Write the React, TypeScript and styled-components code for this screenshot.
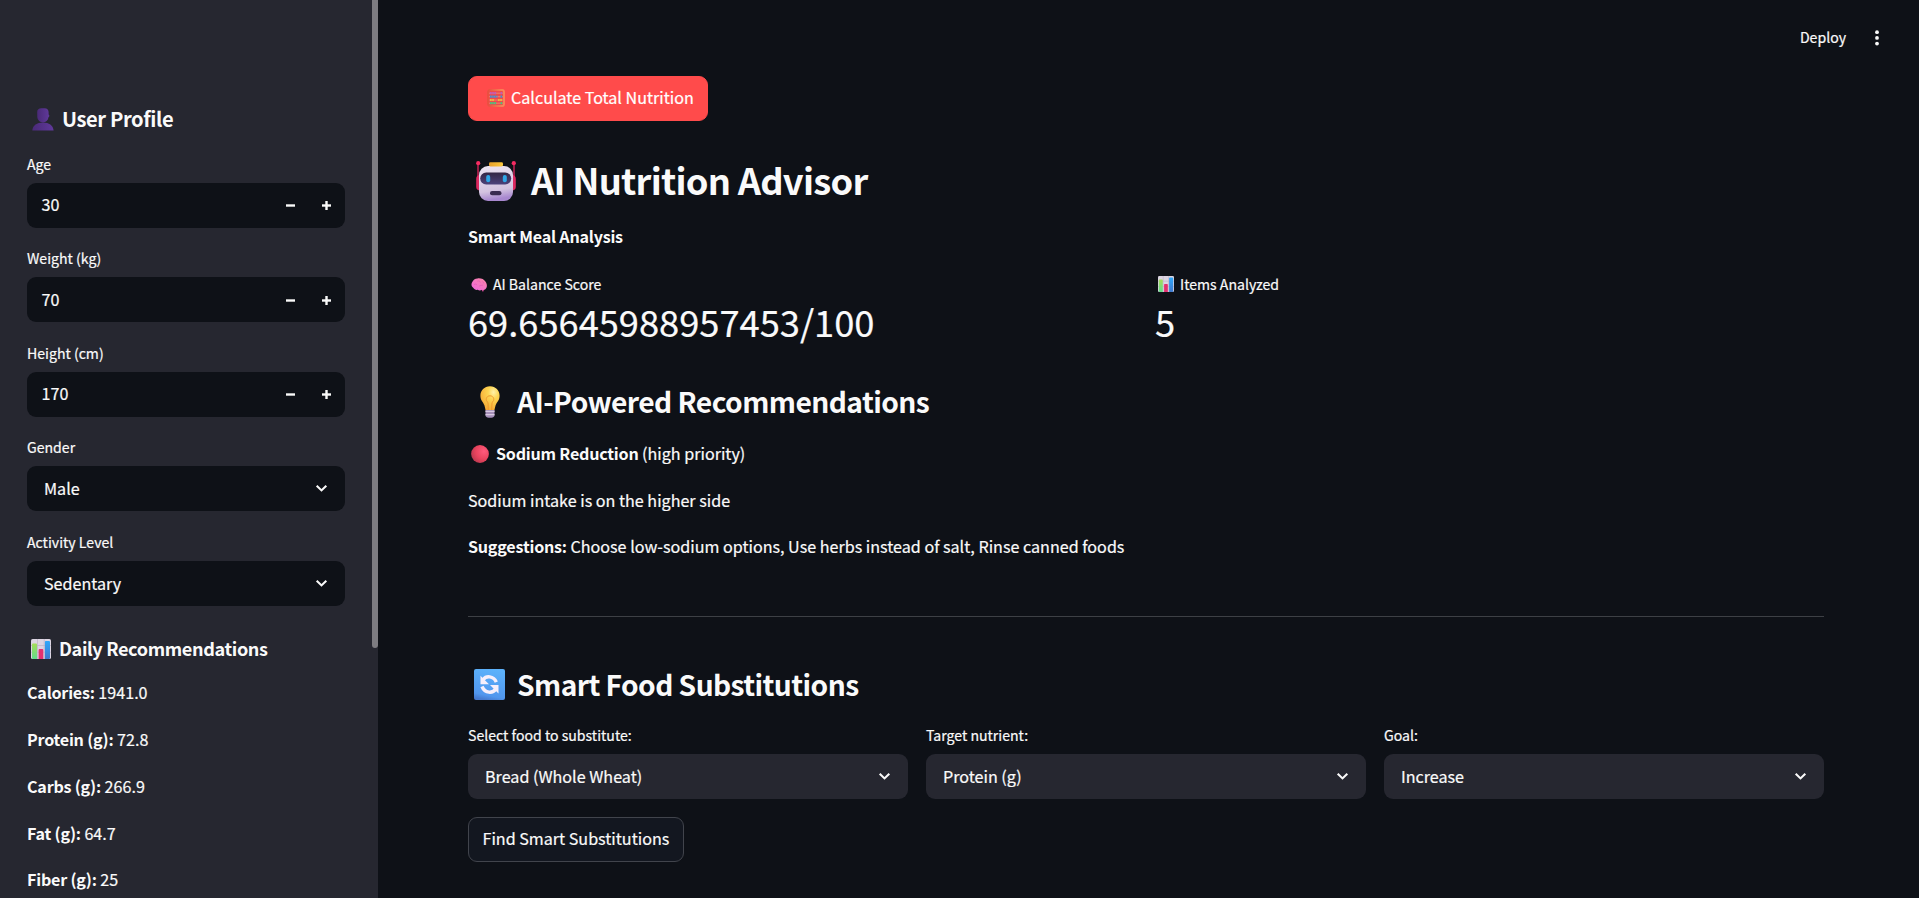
import React from "react";
import styled, { createGlobalStyle } from "styled-components";

const GlobalStyle = createGlobalStyle`
  *, *::before, *::after { box-sizing: border-box; }
  html, body { margin: 0; padding: 0; background: #0e1117; overflow: hidden; }
  body {
    font-family: "Noto Sans CJK SC", "Noto Sans", sans-serif;
    font-size: 16.11px;
    line-height: 28.8px;
    color: #fafafa;
    -webkit-text-stroke: 0.2px currentColor;
  }
  svg { display: block; flex: none; }
`;

const Shell = styled.div`
  display: flex;
  width: 100vw;
  height: 898px;
  overflow: hidden;
`;

const Sidebar = styled.aside`
  display: flex;
  flex: none;
  width: 378px;
  height: 100%;
  background: #262730;
`;

const SidebarContent = styled.div`
  flex: 1;
  height: 100%;
  overflow: hidden;
  padding: 105px 27px 0;
`;

const ScrollTrack = styled.div`
  flex: none;
  width: 6px;
`;

const ScrollThumb = styled.div`
  height: 648px;
  border-radius: 0 0 3px 3px;
  background: #7d7c81;
`;

const Main = styled.main`
  flex: 1;
  min-width: 0;
  height: 100%;
  overflow: hidden;
`;

const TopBar = styled.header`
  display: flex;
  align-items: center;
  justify-content: flex-end;
  gap: 29px;
  height: 76px;
  padding-right: 40px;
  font-size: 14.1px;
`;

const DeployLabel = styled.span`
  margin-top: -2px;
`;

const Page = styled.div`
  display: flex;
  flex-direction: column;
  align-items: stretch;
  padding: 0 95px 0 90px;
`;

const Heading = styled.h2<{ $size: number; $line: number; $top?: number; $bottom?: number; $track?: number }>`
  display: flex;
  align-items: flex-start;
  flex: none;
  height: ${(p) => p.$line}px;
  margin: ${(p) => p.$top ?? 0}px 0 ${(p) => p.$bottom ?? 0}px;
  font-size: ${(p) => p.$size}px;
  line-height: ${(p) => p.$line}px;
  font-weight: 600;
  letter-spacing: ${(p) => p.$track ?? 0}px;
  white-space: nowrap;
  -webkit-text-stroke: 0;
`;

const Glyph = styled.span<{ $left: number; $top: number; $gap: number }>`
  flex: none;
  margin: ${(p) => p.$top}px ${(p) => p.$gap}px 0 ${(p) => p.$left}px;
`;

const Line = styled.p<{ $top?: number }>`
  display: flex;
  flex: none;
  height: 28.8px;
  margin: ${(p) => p.$top ?? 18}px 0 0;
  white-space: pre;
`;

const Strong = styled.strong`
  font-weight: 600;
  letter-spacing: -0.22px;
  -webkit-text-stroke: 0;
`;

const Field = styled.div`
  display: flex;
  flex-direction: column;
  flex: 1;
  min-width: 0;
  margin-bottom: 18px;
`;

const FieldLabel = styled.label<{ $onSidebar?: boolean }>`
  height: 31.5px;
  padding-top: ${(p) => (p.$onSidebar ? 0.2 : 0)}px;
  font-size: 14.1px;
  line-height: ${(p) => (p.$onSidebar ? 25 : 26.6)}px;
`;

const Control = styled.div<{ $onSidebar?: boolean; $kind: "number" | "select" }>`
  display: flex;
  align-items: center;
  justify-content: space-between;
  height: 45px;
  padding: ${(p) => (p.$kind === "number" ? "0 14.5px 1.7px 14.5px" : "0 17px")};
  border-radius: 9px;
  background: ${(p) => (p.$onSidebar ? "#0e1117" : "#262730")};
`;

const Stepper = styled.div`
  display: flex;
  gap: 27px;
  padding-top: 2px;
`;

const Metrics = styled.div`
  display: grid;
  grid-template-columns: 1fr 1fr;
  gap: 18px;
  margin-top: 21.6px;
`;

const MetricLabel = styled.div`
  display: flex;
  height: 24px;
  font-size: 14.1px;
  line-height: 24px;
`;

const MetricValue = styled.div`
  height: 50px;
  font-size: 36.3px;
  line-height: 50px;
  letter-spacing: -0.03px;
  white-space: nowrap;
`;

const Divider = styled.hr`
  width: 100%;
  height: 1px;
  margin: 54.8px 0 0;
  border: 0;
  background: #3d4045;
`;

const FieldRow = styled.div`
  display: flex;
  gap: 18px;
`;

const Button = styled.button<{ $primary?: boolean }>`
  display: flex;
  align-items: flex-start;
  align-self: flex-start;
  flex: none;
  width: ${(p) => (p.$primary ? 240 : 216)}px;
  height: 45px;
  padding: 0 0 0 ${(p) => (p.$primary ? 18 : 13.5)}px;
  border: 1px solid ${(p) => (p.$primary ? "#ff4b4b" : "#41444c")};
  border-radius: 9px;
  background: ${(p) => (p.$primary ? "#ff4b4b" : "#131720")};
  color: ${(p) => (p.$primary ? "#fff" : "#fafafa")};
  font: inherit;
  line-height: 40px;
  white-space: nowrap;
`;

const Chevron = () => (
  <svg width="13" height="9" viewBox="0 0 13 9" fill="none" stroke="#fafafa" strokeWidth="2.1">
    <path d="M1.7 1.7 6.5 6.4 11.3 1.7" />
  </svg>
);

const Minus = () => (
  <svg width="9" height="9" viewBox="0 0 9 9">
    <rect y="3.3" width="9" height="2.4" fill="#fafafa" />
  </svg>
);

const Plus = () => (
  <svg width="9" height="9" viewBox="0 0 9 9" fill="#fafafa">
    <rect y="3.3" width="9" height="2.4" />
    <rect x="3.3" width="2.4" height="9" />
  </svg>
);

const PersonIcon = () => (
  <svg width="22" height="23" viewBox="0 0 22 23">
    <defs>
      <linearGradient id="pBody" x1="0" y1="0" x2="1" y2="0">
        <stop offset="0" stopColor="#4a2a78" />
        <stop offset="1" stopColor="#60399b" />
      </linearGradient>
    </defs>
    <path d="M0.3 22.500C0.6 17.5 5 14.600 11 14.600S21 17.5 21.600 22.500Z" fill="url(#pBody)" />
    <path d="M5.200 4C5.200 1.400 7 .3 9.200.3h3.400c2.400 0 4 1.400 4 3.700v2.600c1 .2 1 2.400-.1 2.600-.5 3.200-2.600 5.200-5.500 5.200S5.600 12.200 5.300 9z" fill="url(#pBody)" />
  </svg>
);

const ChartIcon = ({ size }: { size: number }) => (
  <svg width={size} height={size} viewBox="0 0 20 20">
    <defs>
      <linearGradient id="cGreen" x1="0" y1="0" x2="0" y2="1">
        <stop offset="0" stopColor="#a5dc58" />
        <stop offset="1" stopColor="#62dc8c" />
      </linearGradient>
      <linearGradient id="cBlue" x1="0" y1="0" x2="0" y2="1">
        <stop offset="0" stopColor="#2fa8fb" />
        <stop offset="1" stopColor="#3f78cc" />
      </linearGradient>
    </defs>
    <rect width="20" height="20" rx="1.6" fill="#dcd5e2" />
    <path d="M6.5 0v20M13.2 0v20M0 6.5h20M0 13.2h20" stroke="#bdb2c6" strokeWidth="0.7" />
    <path d="M1 5.500a1 1 0 0 1 1-1h3a1 1 0 0 1 1 1V20H2a1 1 0 0 1-1-1z" fill="url(#cGreen)" />
    <path d="M7.600 11a1 1 0 0 1 1-1h2.700a1 1 0 0 1 1 1v9H7.600z" fill="#e3306f" />
    <path d="M13.900 3a1 1 0 0 1 1-1H18a1 1 0 0 1 1 1v16a1 1 0 0 1-1 1h-4.100z" fill="url(#cBlue)" />
  </svg>
);

const AbacusIcon = () => (
  <svg width="18" height="18" viewBox="0 0 18 18">
    <defs>
      <linearGradient id="aFrame" x1="0" y1="0" x2="1" y2="0">
        <stop offset="0" stopColor="#e8503f" />
        <stop offset="1" stopColor="#fb8a58" />
      </linearGradient>
    </defs>
    <rect x="1" y="1" width="16" height="16" rx="2" fill="#ee4b4c" stroke="url(#aFrame)" strokeWidth="1.8" />
    <path d="M2 4.200h14M2 7.700h14M2 11h14M2 14.200h14" stroke="#e9a28c" strokeWidth="0.6" />
    <path d="M3 4.200h6.500M13.500 4.200h2" stroke="#c55ab4" strokeWidth="2.200" strokeDasharray="1.700 .5" />
    <path d="M3 7.700h7.500M13.500 7.700h2" stroke="#3d8fd6" strokeWidth="2.200" strokeDasharray="1.700 .5" />
    <path d="M3 11h4.500M11 11h4.500" stroke="#f6b73c" strokeWidth="2.200" strokeDasharray="1.700 .5" />
    <path d="M3 14.200h6.500M13.500 14.200h2" stroke="#4cbf7b" strokeWidth="2.200" strokeDasharray="1.700 .5" />
  </svg>
);

const RobotIcon = () => (
  <svg width="40" height="41" viewBox="0 0 40 41">
    <defs>
      <linearGradient id="rFace" x1="0" y1="0" x2="0.15" y2="1">
        <stop offset="0" stopColor="#eee6f2" />
        <stop offset="0.75" stopColor="#d3c3e0" />
        <stop offset="1" stopColor="#a888cf" />
      </linearGradient>
      <linearGradient id="rCap" x1="0" y1="0" x2="1" y2="0">
        <stop offset="0" stopColor="#e8a02b" />
        <stop offset="1" stopColor="#fbc93c" />
      </linearGradient>
      <linearGradient id="rVisor" x1="0" y1="0" x2="0" y2="1">
        <stop offset="0" stopColor="#342744" />
        <stop offset="1" stopColor="#4c427c" />
      </linearGradient>
    </defs>
    <path d="M2 2v15M38 2v15" stroke="#c52256" strokeWidth="1.500" />
    <circle cx="2.200" cy="2.200" r="2.100" fill="#f52c62" />
    <circle cx="37.800" cy="2.200" r="2.100" fill="#f52c62" />
    <path d="M4 14C1.500 14 .2 15.500.2 18v8c0 2.300 1.500 3.500 3.800 3.500zM36 14c2.500 0 3.800 1.500 3.800 4v8c0 2.300-1.500 3.500-3.800 3.500z" fill="#dc2860" />
    <rect x="3" y="5" width="34" height="35" rx="9" fill="url(#rFace)" />
    <rect x="13" y="1.200" width="14" height="4.300" rx="1.400" fill="url(#rCap)" />
    <rect x="4.200" y="11.500" width="31" height="12" rx="6" fill="url(#rVisor)" />
    <rect x="10.200" y="14" width="4" height="7.200" rx="1.900" fill="#2fa6e6" />
    <rect x="26.800" y="14" width="4" height="7.200" rx="1.900" fill="#2fa6e6" />
    <rect x="14" y="30" width="11.500" height="4.300" rx="2.100" fill="#3a2c50" />
  </svg>
);

const BrainIcon = () => (
  <svg width="16" height="15" viewBox="0 0 16 15">
    <defs>
      <linearGradient id="bPink" x1="1" y1="0" x2="0.2" y2="1">
        <stop offset="0" stopColor="#fb86a6" />
        <stop offset="1" stopColor="#f069d8" />
      </linearGradient>
    </defs>
    <path d="M9.800 10.500 12 14 13.400 10.500Z" fill="#e552a6" />
    <path d="M1 4.500C2 2 4 .4 6.500.4 10 0 13 1.200 14.400 3.600c1.500 2 2 4.500.9 6.400-.8 1.700-2.600 2.300-4.300 1.700-1.600 1-3.200.8-4.200.1-2 .4-3.800-.5-4.600-2C.3 8.500.1 6.300 1 4.500z" fill="url(#bPink)" />
    <path d="M3 6.800C4.200 5.500 5.500 6 6 7.200M6.300 3.200c1.500-.8 2.800 0 3 1.300M8 8.200c1.500-1.200 3-.4 4-1.200M11.500 3.600c.8.3 1.200 1 1.200 1.800" fill="none" stroke="#dc58b4" strokeWidth="0.600" />
  </svg>
);

const BulbIcon = () => (
  <svg width="20" height="32" viewBox="0 0 20 32">
    <defs>
      <radialGradient id="lGlass" cx="0.68" cy="0.25" r="0.8">
        <stop offset="0" stopColor="#fff2a8" />
        <stop offset="0.35" stopColor="#fdd552" />
        <stop offset="1" stopColor="#f6a935" />
      </radialGradient>
    </defs>
    <path d="M10 .3C4.300.3.4 4.600.4 9.800c0 4.400 2.800 6.500 4 9.500.6 1.700.7 3.500 1.200 5h8.800c.5-1.500.6-3.300 1.200-5 1.200-3 4-5.100 4-9.500C19.600 4.600 15.700.3 10 .3z" fill="url(#lGlass)" />
    <path d="M8.300 24 8 16.500C5 14.500 6 9.800 10 9.800s5 4.700 2 6.700L11.700 24" fill="none" stroke="#f09a2e" strokeWidth="1" />
    <path d="M5.500 24h9v5.200c0 1.400-1.500 2.500-3 2.500h-3c-1.500 0-3-1.100-3-2.500z" fill="#a58fb8" />
    <path d="M5.500 25.400h9M5.500 28.600h9" stroke="#d8c9e2" strokeWidth="1.300" />
  </svg>
);

const RedDotIcon = () => (
  <svg width="18" height="18" viewBox="0 0 18 18">
    <defs>
      <radialGradient id="dRed" cx="0.72" cy="0.35" r="0.75">
        <stop offset="0" stopColor="#ff5a7c" />
        <stop offset="0.6" stopColor="#e9445e" />
        <stop offset="1" stopColor="#bd3950" />
      </radialGradient>
    </defs>
    <circle cx="9" cy="9" r="8.900" fill="url(#dRed)" />
  </svg>
);

const RefreshIcon = () => (
  <svg width="31" height="31" viewBox="0 0 31 31">
    <defs>
      <linearGradient id="sBlue" x1="0.6" y1="0" x2="0.4" y2="1">
        <stop offset="0" stopColor="#5cb2fb" />
        <stop offset="0.85" stopColor="#5197ee" />
        <stop offset="1" stopColor="#457acf" />
      </linearGradient>
    </defs>
    <rect width="31" height="31" rx="2" fill="url(#sBlue)" />
    <path d="M9.300 10.500C12 6.600 19.500 6.400 22.300 13.200M21.700 20C19 24.400 11 24.800 8 17.500" fill="none" stroke="#f6effb" strokeWidth="3.400" />
    <path d="M6.500 6.800v8.400h8.500z M24.500 24.400V16h-8.500z" fill="#f6effb" />
  </svg>
);

const KebabIcon = () => (
  <svg width="4" height="16" viewBox="0 0 4 16" fill="#fafafa">
    <circle cx="2" cy="2.200" r="1.900" />
    <circle cx="2" cy="7.900" r="1.900" />
    <circle cx="2" cy="13.600" r="1.900" />
  </svg>
);

const NumberField = ({ label, value }: { label: string; value: string }) => (
  <Field>
    <FieldLabel $onSidebar>{label}</FieldLabel>
    <Control $kind="number" $onSidebar>
      <span>{value}</span>
      <Stepper>
        <Minus />
        <Plus />
      </Stepper>
    </Control>
  </Field>
);

const SelectField = ({ label, value, onSidebar }: { label: string; value: string; onSidebar?: boolean }) => (
  <Field>
    <FieldLabel $onSidebar={onSidebar}>{label}</FieldLabel>
    <Control $kind="select" $onSidebar={onSidebar}>
      <span>{value}</span>
      <Chevron />
    </Control>
  </Field>
);

const recommendations = [
  ["Calories:", "1941.0"],
  ["Protein (g):", "72.8"],
  ["Carbs (g):", "266.9"],
  ["Fat (g):", "64.7"],
  ["Fiber (g):", "25"],
];

export default function App() {
  return (
    <>
      <GlobalStyle />
      <Shell>
        <Sidebar>
          <SidebarContent>
            <Heading $size={20.1} $line={27} $bottom={19.4} $track={-0.38}>
              <Glyph $left={5} $top={3} $gap={8}><PersonIcon /></Glyph>
              User Profile
            </Heading>
            <NumberField label="Age" value="30" />
            <NumberField label="Weight (kg)" value="70" />
            <NumberField label="Height (cm)" value="170" />
            <SelectField label="Gender" value="Male" onSidebar />
            <SelectField label="Activity Level" value="Sedentary" onSidebar />
            <Heading $size={18.1} $line={28} $top={28} $bottom={16.3} $track={-0.36}>
              <Glyph $left={4} $top={5} $gap={8}><ChartIcon size={20} /></Glyph>
              Daily Recommendations
            </Heading>
            {recommendations.map(([name, amount], i) => (
              <Line key={name} $top={i === 0 ? 0 : 18}>
                <Strong>{name}</Strong>
                <span>{` ${amount}`}</span>
              </Line>
            ))}
          </SidebarContent>
          <ScrollTrack>
            <ScrollThumb />
          </ScrollTrack>
        </Sidebar>
        <Main>
          <TopBar>
            <DeployLabel>Deploy</DeployLabel>
            <KebabIcon />
          </TopBar>
          <Page>
            <Button $primary>
              <Glyph $left={0} $top={12} $gap={6}><AbacusIcon /></Glyph>
              Calculate Total Nutrition
            </Button>
            <Heading as="h1" $size={36.3} $line={49} $top={33.7} $track={-0.75}>
              <Glyph $left={8} $top={6} $gap={15}><RobotIcon /></Glyph>
              AI Nutrition Advisor
            </Heading>
            <Line $top={17.9}><Strong>Smart Meal Analysis</Strong></Line>
            <Metrics>
              <div>
                <MetricLabel>
                  <Glyph $left={3} $top={6} $gap={6}><BrainIcon /></Glyph>
                  AI Balance Score
                </MetricLabel>
                <MetricValue>69.65645988957453/100</MetricValue>
              </div>
              <div>
                <MetricLabel>
                  <Glyph $left={3} $top={4} $gap={6}><ChartIcon size={16} /></Glyph>
                  Items Analyzed
                </MetricLabel>
                <MetricValue>5</MetricValue>
              </div>
            </Metrics>
            <Heading $size={28.2} $line={38} $top={36.4} $track={-0.56}>
              <Glyph $left={12} $top={4} $gap={17}><BulbIcon /></Glyph>
              AI-Powered Recommendations
            </Heading>
            <Line $top={18.4}>
              <Glyph $left={3} $top={6} $gap={7}><RedDotIcon /></Glyph>
              <Strong>Sodium Reduction</Strong> (high priority)
            </Line>
            <Line>Sodium intake is on the higher side</Line>
            <Line>
              <Strong>Suggestions:</Strong> Choose low-sodium options, Use herbs instead of salt, Rinse canned foods
            </Line>
            <Divider />
            <Heading $size={28.2} $line={38} $top={47.7} $bottom={19.8} $track={-0.56}>
              <Glyph $left={6} $top={4} $gap={12}><RefreshIcon /></Glyph>
              Smart Food Substitutions
            </Heading>
            <FieldRow>
              <SelectField label="Select food to substitute:" value="Bread (Whole Wheat)" />
              <SelectField label="Target nutrient:" value="Protein (g)" />
              <SelectField label="Goal:" value="Increase" />
            </FieldRow>
            <Button>Find Smart Substitutions</Button>
          </Page>
        </Main>
      </Shell>
    </>
  );
}
